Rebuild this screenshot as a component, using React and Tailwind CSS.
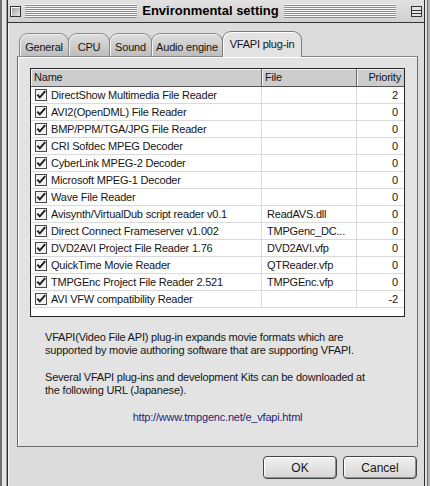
import { useState } from "react";

const rows = [
  ["DirectShow Multimedia File Reader", "", "2"],
  ["AVI2(OpenDML) File Reader", "", "0"],
  ["BMP/PPM/TGA/JPG File Reader", "", "0"],
  ["CRI Sofdec MPEG Decoder", "", "0"],
  ["CyberLink MPEG-2 Decoder", "", "0"],
  ["Microsoft MPEG-1 Decoder", "", "0"],
  ["Wave File Reader", "", "0"],
  ["Avisynth/VirtualDub script reader v0.1", "ReadAVS.dll", "0"],
  ["Direct Connect Frameserver v1.002", "TMPGenc_DC...", "0"],
  ["DVD2AVI Project File Reader 1.76", "DVD2AVI.vfp", "0"],
  ["QuickTime Movie Reader", "QTReader.vfp", "0"],
  ["TMPGEnc Project File Reader 2.521", "TMPGEnc.vfp", "0"],
  ["AVI VFW compatibility Reader", "", "-2"],
];

const tabs = [
  { label: "General", w: "w-[50px]" },
  { label: "CPU", w: "w-[42px]" },
  { label: "Sound", w: "w-[43px]" },
  { label: "Audio engine", w: "w-[72px]" },
  { label: "VFAPI plug-in", w: "w-[80px]" },
];

function Check() {
  return (
    <svg width="12" height="12" viewBox="0 0 12 12" className="shrink-0">
      <rect x="0.5" y="0.5" width="11" height="11" fill="#f2f2f2" stroke="#4a4a4a" />
      <path d="M2.3 5.6 L4.8 8.4 L10.2 2.2" stroke="#1c1c1c" strokeWidth="1.9" fill="none" />
    </svg>
  );
}

function Stripes() {
  return (
    <div className="flex-1 h-[14px] bg-[repeating-linear-gradient(to_bottom,#f6f6f6_0px,#f6f6f6_1px,#8e8e8e_1px,#8e8e8e_2px)]" />
  );
}

export default function App() {
  const [active] = useState(4);

  return (
    <div className="w-[430px] h-[486px] flex overflow-hidden bg-[#d8d8d8] font-['Liberation_Sans',Arial,sans-serif] text-[11px] text-[#151515] tracking-[-0.2px]">
      {/* window behind, left edge */}
      <div className="w-[7px] shrink-0 flex">
        <div className="w-[2px] bg-[#707070]" />
        <div className="flex-1 bg-[#e6e6e6] border-r border-[#a0a0a0]" />
      </div>

      <div className="w-[418px] shrink-0 flex flex-col border-x border-[#2c2c2c] bg-[#dcdcdc]">
        {/* title bar */}
        <div className="h-[23px] shrink-0 flex items-center pl-[2px] pr-[2px] border-b border-[#333] bg-[linear-gradient(to_bottom,#e2e2e2,#cfcfcf)]">
          <div className="w-[11px] h-[11px] border border-[#333] bg-[linear-gradient(135deg,#9a9a9a,#e8e8e8)] shadow-[inset_1px_1px_0_#fff]" />
          <div className="w-[4px]" />
          <Stripes />
          <div className="px-[5px] text-[13px] font-bold tracking-normal text-black">Environmental setting</div>
          <Stripes />
          <div className="w-[15px]" />
          <div className="w-[11px] h-[11px] border border-[#333] bg-[#e4e4e4] flex flex-col">
            <div className="h-[4px] border-b border-[#333]" />
            <div className="h-[3px] border-b border-[#333]" />
          </div>
        </div>

        {/* content */}
        <div className="flex-1 flex flex-col pl-[9px] pr-[6px] shadow-[inset_1px_0_0_#f4f4f4]">
          {/* tabs */}
          <div className="h-[33px] flex items-end pl-[2px] relative z-10">
            {tabs.map((t, i) =>
              i === active ? (
                <div
                  key={t.label}
                  className={`${t.w} h-[26px] -mb-px flex justify-center pt-[4px] rounded-t-[9px] border border-b-0 border-[#7c7c7c] bg-[#e3e3e3] shadow-[inset_1px_1px_0_#fff]`}
                >
                  {t.label}
                </div>
              ) : (
                <div
                  key={t.label}
                  className={`${t.w} h-[23px] -mr-px flex justify-center pt-[5px] rounded-t-[9px] border border-b-0 border-[#8a8a8a] bg-[linear-gradient(to_bottom,#dedede,#bdbdbd)] shadow-[inset_1px_1px_0_#f0f0f0]`}
                >
                  {t.label}
                </div>
              )
            )}
          </div>

          {/* panel */}
          <div className="h-[391px] flex flex-col border border-[#6a6a6a] border-t-[#8a8a8a] bg-[#e3e3e3] shadow-[inset_1px_1px_0_#fff] pl-[12px] pt-[11px]">
            <div className="w-[375px] h-[249px] border border-[#262626] bg-white flex flex-col">
              <div className="grid grid-cols-[231px_95px_47px] h-[18px] bg-[#cdcdcd] border-b border-[#555]">
                <div className="pl-[3px] flex items-center border-r border-[#666] shadow-[inset_1px_1px_0_#f4f4f4]">Name</div>
                <div className="pl-[3px] flex items-center border-r border-[#666] shadow-[inset_1px_1px_0_#f4f4f4]">File</div>
                <div className="pr-[3px] flex items-center justify-end shadow-[inset_1px_1px_0_#f4f4f4]">Priority</div>
              </div>
              {rows.map(([name, file, pri]) => (
                <div key={name} className="grid grid-cols-[231px_95px_47px] h-[17px] border-b border-[#dadada]">
                  <div className="flex items-center gap-[4px] pl-[4px] border-r border-[#dadada] whitespace-nowrap overflow-hidden">
                    <Check />
                    <span>{name}</span>
                  </div>
                  <div className="flex items-center pl-[5px] border-r border-[#dadada] whitespace-nowrap overflow-hidden">{file}</div>
                  <div className="flex items-center justify-end pr-[6px]">{pri}</div>
                </div>
              ))}
            </div>

            <div className="pl-[15px] mt-[14px] leading-[13px]">
              <p>VFAPI(Video File API) plug-in expands movie formats which are</p>
              <p>supported by movie authoring software that are supporting VFAPI.</p>
              <p className="mt-[14px]">Several VFAPI plug-ins and development Kits can be downloaded at</p>
              <p>the following URL (Japanese).</p>
            </div>
            <div className="mt-[14px] pr-[12px] leading-[13px] text-center text-[#1e1e7a]">http://www.tmpgenc.net/e_vfapi.html</div>
          </div>

          {/* buttons */}
          <div className="mt-[9px] flex justify-end gap-[6px] pr-[1px]">
            {["OK", "Cancel"].map((b) => (
              <button
                key={b}
                className="w-[74px] h-[23px] rounded-[4px] border border-[#444] bg-[linear-gradient(to_bottom,#f0f0f0,#d6d6d6)] shadow-[inset_1px_1px_0_#fff,inset_-1px_-1px_0_#8c8c8c] text-[12px] tracking-normal text-[#151515]"
              >
                {b}
              </button>
            ))}
          </div>
        </div>
      </div>

      {/* window behind, right edge */}
      <div className="flex-1 flex bg-[#b4b4b4]">
        <div className="w-[2px] bg-[#e0e0e0]" />
        <div className="w-[1px] bg-[#6a6a6a]" />
      </div>
    </div>
  );
}
